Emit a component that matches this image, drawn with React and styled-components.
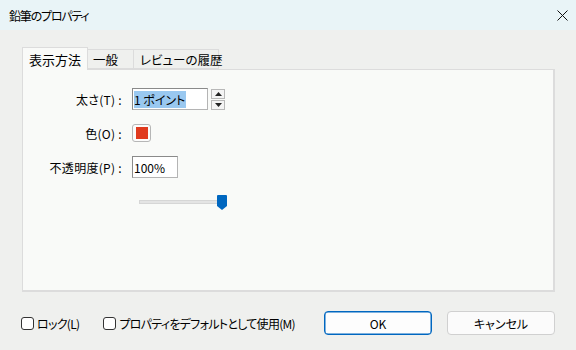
import React from "react";
import styled, { createGlobalStyle } from "styled-components";

const GlobalStyle = createGlobalStyle`
  html, body {
    margin: 0;
    padding: 0;
    background: #eff0ee;
  }
  body {
    font-family: "Noto Sans CJK JP", "Noto Sans", sans-serif;
    font-size: 12px;
    color: #000;
    font-feature-settings: "palt";
  }
`;

const Window = styled.div`
  width: 576px;
  height: 350px;
  display: flex;
  flex-direction: column;
  background: #eff0ee;
`;

const TitleBar = styled.div`
  height: 30px;
  display: flex;
  align-items: center;
  justify-content: space-between;
  padding: 0 4px 0 9px;
  background: #e9f4f7;
  font-size: 12px;
  letter-spacing: -1.2px;
`;

const CloseButton = styled.div`
  width: 20px;
  height: 30px;
  display: flex;
  align-items: center;
  justify-content: center;
`;

const Body = styled.div`
  flex: 1;
  display: flex;
  flex-direction: column;
  padding: 17px 21px 0 22px;
`;

const TabRow = styled.div`
  display: flex;
  align-items: flex-end;
  height: 22px;
  position: relative;
  z-index: 1;
`;

const Tab = styled.div`
  width: ${(p) => p.$width}px;
  height: ${(p) => (p.$active ? "23px" : "20px")};
  padding-left: ${(p) => p.$pad}px;
  display: flex;
  align-items: center;
  font-size: ${(p) => (p.$active ? "13px" : "12.5px")};
  background: ${(p) => (p.$active ? "#f9faf8" : "#eff0ee")};
  border: 1px solid #dcdcdc;
  border-bottom: ${(p) => (p.$active ? "none" : "1px solid #dcdcdc")};
  border-left: ${(p) => (p.$active ? "1px solid #dcdcdc" : "none")};
  margin-bottom: ${(p) => (p.$active ? "-1px" : "0")};
  box-sizing: border-box;
  white-space: nowrap;
`;

const Panel = styled.div`
  width: 533px;
  height: 223px;
  box-sizing: border-box;
  background: #f9faf8;
  border: 1px solid #dcdcdc;
  border-bottom-width: 2px;
  border-right-width: 2px;
  padding-top: 18px;
`;

const FormGrid = styled.div`
  display: grid;
  grid-template-columns: 109px auto;
  grid-template-rows: 22px 18px 22px;
  row-gap: 14px;
  align-items: center;
`;

const Label = styled.div`
  text-align: right;
  padding-right: 10px;
  font-size: 12px;
  letter-spacing: 0.3px;
  white-space: nowrap;
`;

const FieldRow = styled.div`
  display: flex;
  align-items: center;
  gap: 3px;
`;

const TextBox = styled.div`
  width: ${(p) => p.$width}px;
  height: 22px;
  box-sizing: border-box;
  border: 1px solid #b4b4b4;
  border-top-color: #8a8a8a;
  border-left-color: #8a8a8a;
  background: #fff;
  display: flex;
  align-items: center;
  padding-left: 1px;
  font-size: 12px;
`;

const Selected = styled.span`
  background: #99c8f0;
  line-height: 17px;
  padding-right: 1px;
`;

const Spinner = styled.div`
  display: flex;
  flex-direction: column;
  gap: 1px;
`;

const SpinButton = styled.div`
  width: 14px;
  height: 10px;
  box-sizing: border-box;
  border: 1px solid #b8b8b8;
  background: #f4f4f4;
  display: flex;
  align-items: center;
  justify-content: center;
`;

const Swatch = styled.div`
  width: 19px;
  height: 18px;
  box-sizing: border-box;
  border: 1px solid #b6b6b6;
  border-radius: 3px;
  background: #fbfbfb;
  display: flex;
  align-items: center;
  justify-content: center;
`;

const SwatchColor = styled.div`
  width: 12px;
  height: 12px;
  background: #e03a1e;
`;

const SliderWrap = styled.div`
  margin: 16px 0 0 116px;
  width: 90px;
  height: 16px;
  display: flex;
  align-items: center;
  position: relative;
`;

const Track = styled.div`
  width: 84px;
  height: 4px;
  box-sizing: border-box;
  background: #e4e4e4;
  border: 1px solid #d6d6d6;
`;

const Thumb = styled.svg`
  position: absolute;
  left: 78px;
  top: 1px;
`;

const Footer = styled.div`
  height: 59px;
  display: flex;
  align-items: center;
  padding-top: 3px;
  box-sizing: border-box;
`;

const CheckItem = styled.label`
  display: flex;
  align-items: center;
  gap: 2px;
  margin-left: ${(p) => p.$ml || 0}px;
  font-size: 12px;
  letter-spacing: -0.7px;
  white-space: nowrap;
`;

const Box = styled.span`
  width: 13px;
  height: 13px;
  box-sizing: border-box;
  border: 1px solid #333;
  border-radius: 3px;
  background: #fff;
  margin-right: 1px;
`;

const Buttons = styled.div`
  margin-left: auto;
  display: flex;
  gap: 15px;
`;

const Button = styled.div`
  width: 108px;
  height: 24px;
  box-sizing: border-box;
  border-radius: 4px;
  display: flex;
  align-items: center;
  justify-content: center;
  font-size: 12px;
  background: ${(p) => (p.$primary ? "#fdfdfd" : "#fbfbfb")};
  border: 1px solid ${(p) => (p.$primary ? "#0067c0" : "#d0d0d0")};
  box-shadow: ${(p) => (p.$primary ? "inset 0 0 0 0.5px #0067c0" : "none")};
`;

const Up = () => (
  <svg width="7" height="4" viewBox="0 0 7 4">
    <path d="M0 4 L3.5 0 L7 4 Z" fill="#222" />
  </svg>
);

const Down = () => (
  <svg width="7" height="4" viewBox="0 0 7 4">
    <path d="M0 0 L3.5 4 L7 0 Z" fill="#222" />
  </svg>
);

export default function App() {
  return (
    <>
      <GlobalStyle />
      <Window>
        <TitleBar>
          <span>鉛筆のプロパティ</span>
          <CloseButton>
            <svg width="11" height="11" viewBox="0 0 11 11">
              <path d="M0.5 0.5 L10.5 10.5 M10.5 0.5 L0.5 10.5" stroke="#111" strokeWidth="1" />
            </svg>
          </CloseButton>
        </TitleBar>
        <Body>
          <TabRow>
            <Tab $active $width={66} $pad={6}>表示方法</Tab>
            <Tab $width={46} $pad={5}>一般</Tab>
            <Tab $width={85} $pad={6}>レビューの履歴</Tab>
          </TabRow>
          <Panel>
            <FormGrid>
              <Label>太さ(T) :</Label>
              <FieldRow>
                <TextBox $width={76}>
                  <Selected>1 ポイント</Selected>
                </TextBox>
                <Spinner>
                  <SpinButton><Up /></SpinButton>
                  <SpinButton><Down /></SpinButton>
                </Spinner>
              </FieldRow>
              <Label>色(O) :</Label>
              <FieldRow>
                <Swatch>
                  <SwatchColor />
                </Swatch>
              </FieldRow>
              <Label>不透明度(P) :</Label>
              <FieldRow>
                <TextBox $width={46}>100%</TextBox>
              </FieldRow>
            </FormGrid>
            <SliderWrap>
              <Track />
              <Thumb width="10" height="15" viewBox="0 0 10 15">
                <path d="M0 1 Q0 0 1 0 L9 0 Q10 0 10 1 L10 11 L5 15 L0 11 Z" fill="#0067c0" />
              </Thumb>
            </SliderWrap>
          </Panel>
          <Footer>
            <CheckItem $ml={-1}>
              <Box />
              ロック(L)
            </CheckItem>
            <CheckItem $ml={24}>
              <Box />
              プロパティをデフォルトとして使用(M)
            </CheckItem>
            <Buttons>
              <Button $primary>OK</Button>
              <Button>キャンセル</Button>
            </Buttons>
          </Footer>
        </Body>
      </Window>
    </>
  );
}
